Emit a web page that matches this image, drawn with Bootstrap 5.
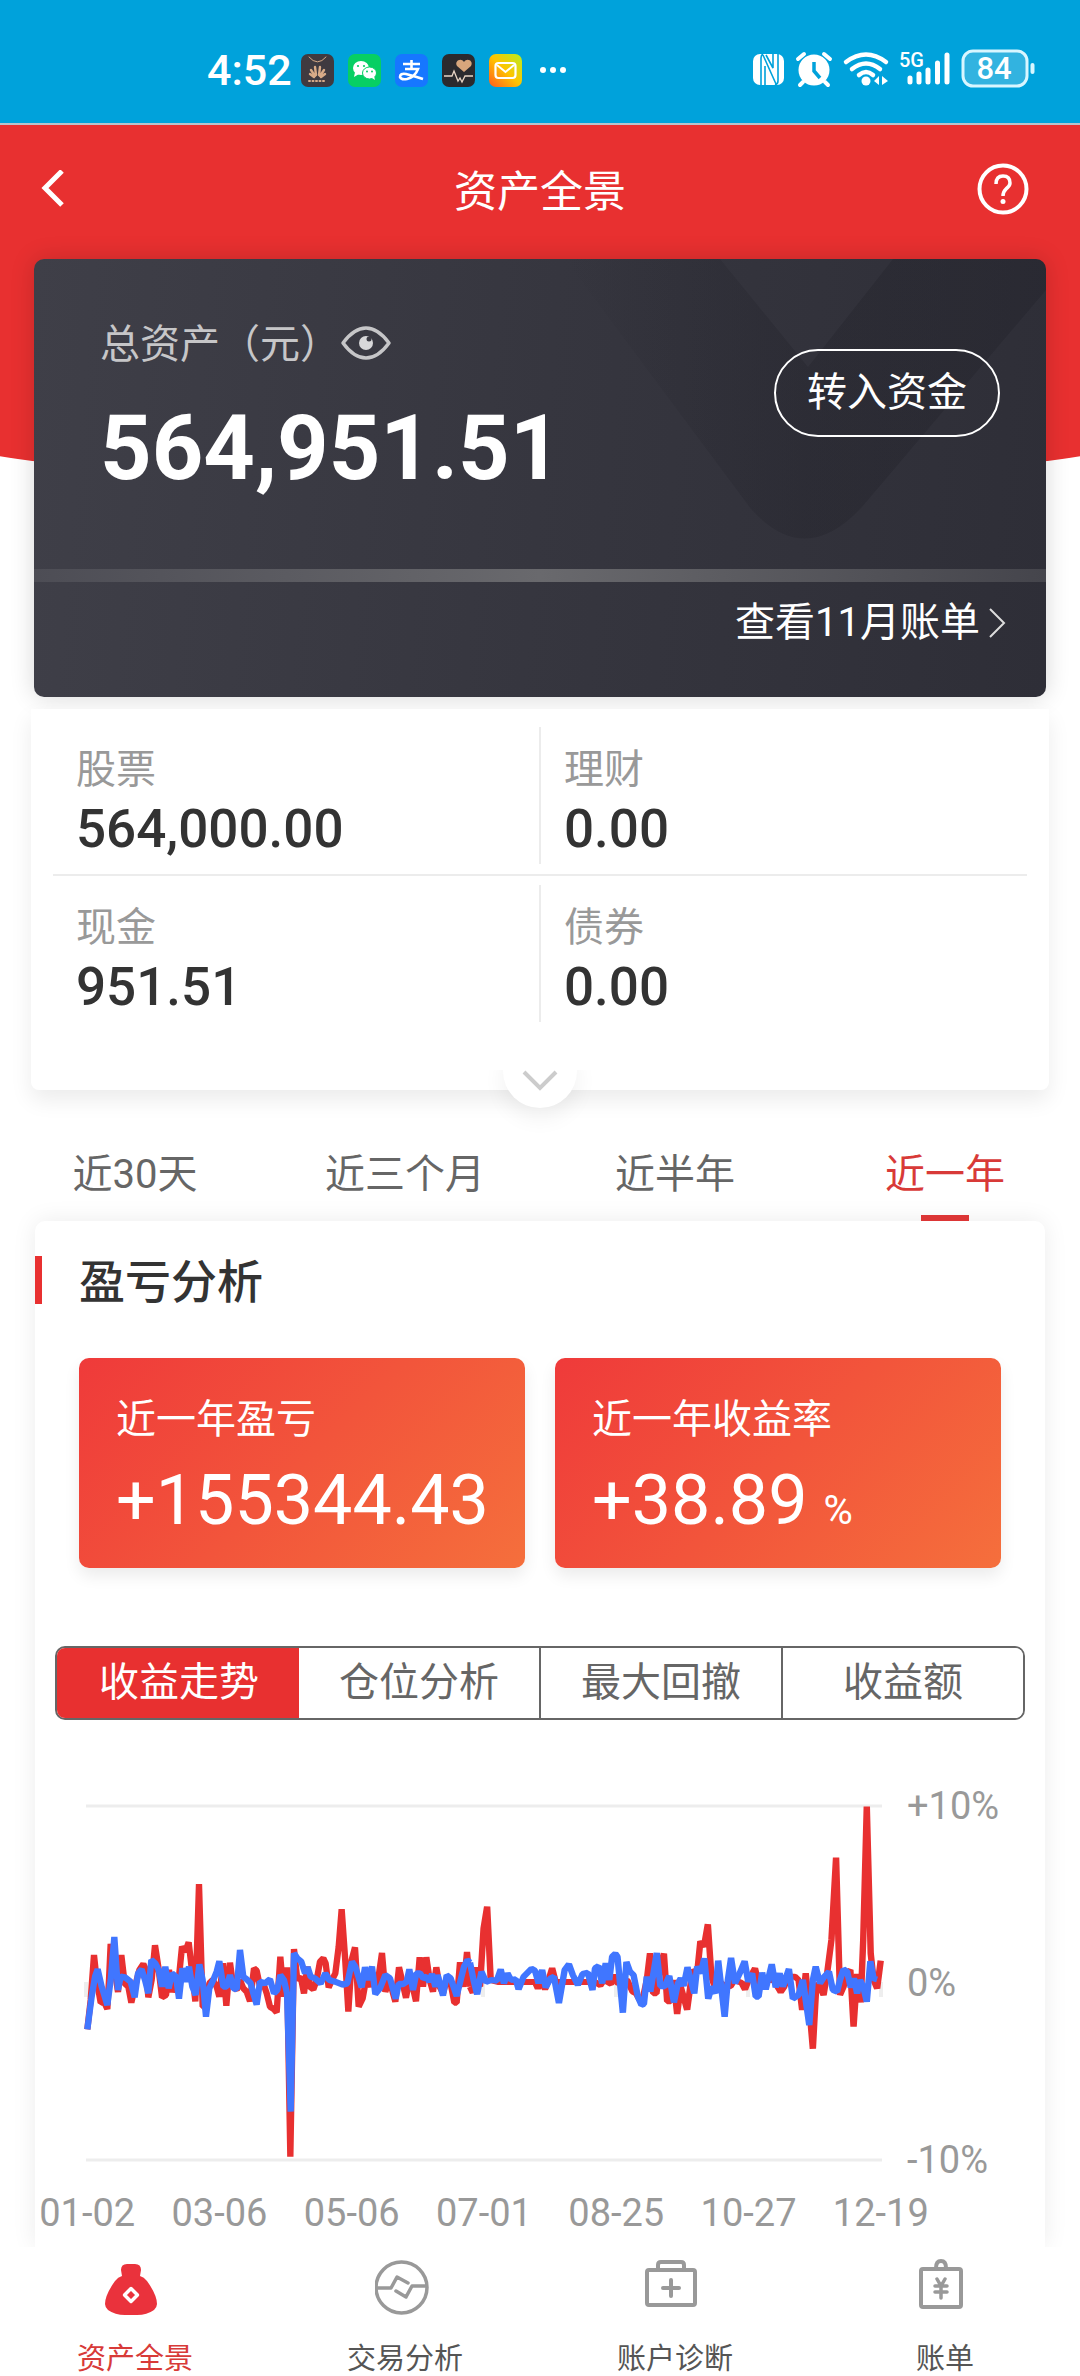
<!DOCTYPE html>
<html lang="zh-CN">
<head>
<meta charset="utf-8">
<meta name="viewport" content="width=device-width, initial-scale=1">
<title>资产全景</title>
<link rel="stylesheet" href="https://cdn.jsdelivr.net/npm/bootstrap@5.3.0/dist/css/bootstrap.min.css">
<style>
  :root { --brand: #e83030; --ink: #333; --muted: #999; --soft: #666; }
  body { font-family: Roboto, "Noto Sans CJK SC", sans-serif; font-size: 40px; line-height: 60px; color: var(--ink); background: #fff; overflow-x: hidden; }
  svg { display: block; flex: none; }
  .status-bar { background: #00a2db; height: 125px; border-bottom: 2px solid #b9c3cc; padding: 14px 44px 0 207px; color: #fff; }
  .status-bar > * { height: 112px; }
  .clock { font-size: 43px; font-weight: 500; width: 94px; }
  .app-icons { gap: 14px; }
  .hero { position: relative; background: var(--brand); height: 312px; margin-bottom: -178px; clip-path: inset(0 0 -60px 0); }
  .hero::after { content: ""; position: absolute; left: -5%; right: -5%; top: 100%; height: 46px; background: var(--brand); border-radius: 0 0 50% 50% / 0 0 100% 100%; }
  .title-bar { height: 130px; padding: 0 40px; }
  .title-bar h1 { font-size: 43px; line-height: 60px; font-weight: 400; margin: 0; padding-top: 4px; color: #fff; }
  .side-slot { width: 64px; }
  .card-shade { box-shadow: 0 0 24px rgba(0,0,0,.16); border-radius: 10px; margin: 0 34px; position: relative; }
  .total-card { position: relative; border-radius: 10px; overflow: hidden; color: #fff; background: linear-gradient(95deg, #3f3f48 0%, #36363f 50%, #2e2e37 100%); }
  .sheen { position: absolute; top: 0; right: 0; }
  .total-main { position: relative; height: 310px; padding: 56px 46px 0 66px; }
  .total-label { color: #c6c6c8; }
  .total-label button { border: 0; background: none; padding: 0 0 4px; }
  .total-value { font-size: 90px; line-height: 100px; font-weight: 700; margin-top: 24px; }
  .transfer { border: 2px solid #fff; border-radius: 44px; height: 88px; padding: 0 31px; color: #fff; background: transparent; font-size: 40px; line-height: 60px; margin-top: 34px; }
  .strip { position: relative; height: 13px; background: linear-gradient(90deg, #4d4d55, #69696d 50%, #45454c); }
  .bill-row { position: relative; height: 115px; padding: 11px 40px 0 0; }
  .bill-row a { color: #fff; text-decoration: none; gap: 9px; }
  .assets { position: relative; margin: 12px 31px 0; padding: 18px 22px 0; height: 381px; background: #fff; border-radius: 0 0 8px 8px; box-shadow: 0 10px 22px rgba(0,0,0,.08); }
  .asset-row { height: 157px; }
  .asset-row + .asset-row { border-top: 2px solid #ececec; }
  .asset-row:first-child { height: 147px; }
  .asset-cell { padding: 13px 23px 0; height: 137px; flex: 1; }
  .asset-row + .asset-row .asset-cell { margin-top: 9px; }
  .asset-cell + .asset-cell { border-left: 2px solid #ececec; }
  .asset-cell dt { font-weight: 400; color: var(--muted); line-height: 60px; }
  .asset-cell dd { font-size: 53px; line-height: 58px; font-weight: 500; margin: 0; }
  .expander { position: absolute; left: 50%; bottom: -18px; margin-left: -37px; width: 74px; height: 74px; border: 0; border-radius: 50%; background: #fff; padding: 20px 0 0; box-shadow: 0 10px 22px rgba(0,0,0,.06); clip-path: inset(36px -40px -40px -40px); }
  .periods { margin-top: 50px; height: 81px; }
  .periods button { flex: 1; border: 0; border-radius: 0; background: none; color: var(--soft); padding: 5px 0 0; font-size: 40px; line-height: 60px; display: flex; flex-direction: column; align-items: center; justify-content: space-between; }
  .periods .active { color: #d83a38; }
  .periods .active::after { content: ""; width: 48px; height: 6px; background: #dc3636; position: relative; z-index: 1; }
  .analysis { margin: 0 35px; padding-top: 35px; height: 1026px; border-radius: 10px 10px 0 0; background: #fff; box-shadow: 0 0 24px rgba(0,0,0,.08); }
  .analysis h2 { border-left: 7px solid var(--brand); padding: 5px 0 0 37px; margin: 0; font-size: 46px; line-height: 43px; font-weight: 500; }
  .kpis { padding: 54px 44px 0; gap: 30px; }
  .kpi { flex: 1; min-width: 0; height: 210px; border-radius: 10px; padding: 32px 37px 0; color: #fff; background: linear-gradient(135deg, #ef3a3a, #f56f3c); box-shadow: 0 8px 16px rgba(0,0,0,.08); white-space: nowrap; }
  .kpi-value { font-size: 70px; line-height: 100px; }
  .kpi-value span { font-size: 40px; margin-left: 16px; }
  .segments { margin: 78px 20px 0; height: 74px; border: 2px solid var(--soft); border-radius: 10px; overflow: hidden; }
  .segments button { flex: 1; border: 0; border-radius: 0; background: #fff; color: var(--soft); padding: 0; font-size: 40px; line-height: 60px; }
  .segments button + button { border-left: 2px solid var(--soft); }
  .segments .active { background: var(--brand); color: #fff; margin: -2px 0 -2px -2px; padding-left: 4px; }
  .segments .active + button { border-left: 0; }
  .plot-row { margin-top: 60px; padding: 0 49px; }
  .plot-row .plot { flex: 1; width: 800px; height: auto; }
  .y-labels { width: 112px; padding-left: 23px; font-size: 38px; line-height: 52px; color: var(--muted); }
  .x-labels { padding-right: 98px; margin-left: -14px; font-size: 38px; line-height: 54px; color: var(--muted); }
  .x-labels span { flex: 1; text-align: center; white-space: nowrap; }
  .bottom-nav { position: relative; height: 129px; background: #fff; }
  .bottom-nav a { flex: 1; color: #555; text-decoration: none; font-size: 29px; line-height: 36px; padding-top: 8px; gap: 26px; }
  .bottom-nav a.active { color: #d83a38; }
</style>
</head>
<body>
<div class="status-bar d-flex align-items-start justify-content-between">
  <div class="d-flex align-items-center">
    <span class="clock">4:52</span>
    <div class="app-icons d-flex align-items-center">
      <svg width="33" height="33" viewBox="0 0 33 33"><rect width="33" height="33" rx="7" fill="#403a40"/><g fill="none" stroke="#d9ab88" stroke-linecap="round"><path d="M8 3q8.500 10 17 0" stroke-width="1"/><path d="M15 21l-1-8M14 22l-4-6M13 23l-4-3M18 21l1-8M19 22l4-6M20 23l4-3" stroke-width="2.400"/><path d="M8 27h17" stroke-width="2" stroke-dasharray="1 2.500"/></g></svg>
      <svg width="33" height="33" viewBox="0 0 33 33"><rect width="33" height="33" rx="7" fill="#07cf63"/><ellipse cx="13" cy="14" rx="8" ry="7" fill="#fff"/><path d="M7 18l-1 5 5-3z" fill="#fff"/><ellipse cx="21.500" cy="19" rx="7" ry="6" fill="#fff" stroke="#07cf63"/><path d="M24 24l3 2-1-4z" fill="#fff"/><g fill="#07cf63"><circle cx="10" cy="12" r="1.100"/><circle cx="16" cy="12" r="1.100"/><circle cx="19" cy="17.500" r="1"/><circle cx="24" cy="17.500" r="1"/></g></svg>
      <svg width="33" height="33" viewBox="0 0 33 33"><rect width="33" height="33" rx="7" fill="#1677ff"/><path d="M8 10h17M16.500 6v9M10 15h13q-3 8-11 10-6 1-7-2 0-4 6-3 8 2 17 5" fill="none" stroke="#fff" stroke-width="2.600"/></svg>
      <svg width="33" height="33" viewBox="0 0 33 33"><rect width="33" height="33" rx="7" fill="#2b2a2e"/><path d="M22 18l-7-6c-3-5 4-9 7-4 3-5 10-1 7 4z" fill="#d8a67c"/><path d="M2 22h8l2-5 4 10 2-3 2 4 3-6h8" fill="none" stroke="#e8d5c6" stroke-width="1.300"/></svg>
      <svg width="33" height="33" viewBox="0 0 33 33"><defs><linearGradient id="mail" x1="0" y1="1" x2="1" y2="0"><stop offset="0" stop-color="#ff5a1f"/><stop offset=".5" stop-color="#ffc400"/><stop offset="1" stop-color="#b6ee20"/></linearGradient></defs><rect width="33" height="33" rx="7" fill="url(#mail)"/><rect x="6.500" y="9" width="20" height="15" rx="3" fill="none" stroke="#fff" stroke-width="2.200"/><path d="M8 11l8.500 7 8.500-7" fill="none" stroke="#fff" stroke-width="2"/></svg>
      <svg width="36" height="33" viewBox="0 0 36 33" fill="#fff"><circle cx="7" cy="16" r="3"/><circle cx="17" cy="16" r="3"/><circle cx="27" cy="16" r="3"/></svg>
    </div>
  </div>
  <div class="d-flex align-items-center">
  <svg width="286" height="60" viewBox="748 40 286 60" fill="#fff" role="img" aria-label="NFC 5G 84%">
    <rect x="751" y="54" width="31" height="31" rx="7"/>
    <path d="M759 85V58q0-3 2-4M761 55l13 29M773 85q3-1 3-4V54" fill="none" stroke="#00a2db" stroke-width="1.600"/>
    <path d="M763 66v19M771 54v14l-7-13" fill="none" stroke="#00a2db" stroke-width="1.600"/>
    <circle cx="812" cy="70" r="15.500"/><path d="M796 59l6-5M828 59l-6-5M801 82l-3 3M823 82l3 3" stroke="#fff" stroke-width="4" stroke-linecap="round"/><path d="M812 62v9l6 7" fill="none" stroke="#00a2db" stroke-width="3.500"/>
    <g fill="none" stroke="#fff" stroke-width="4.500" stroke-linecap="round"><path d="M844 62q20-15 40 0"/><path d="M850 69q14-11 28 0"/><path d="M857 75q7-6 14 0"/></g><circle cx="864" cy="81" r="4.500"/><path d="M877 76v9l-5-4zM880 76v9l6-4z"/>
    <text x="897" y="67" font-size="20" font-weight="500">5G</text>
    <g stroke="#fff" stroke-width="5" stroke-linecap="round"><path d="M908 78v4M917 74v8M926 70v12M935.500 63v19M945 55v27"/></g>
    <rect x="961" y="51" width="64" height="35" rx="10" fill="#32b3e0" stroke="#d8f6ff" stroke-width="3"/><path d="M1030.500 65v7" stroke="#d8f6ff" stroke-width="4" stroke-linecap="round"/>
    <text x="992" y="79" font-size="31" font-weight="500" text-anchor="middle">84</text>
  </svg>
  </div>
</div>

<header class="hero">
  <div class="title-bar d-flex align-items-center justify-content-between">
    <a href="#" class="side-slot" aria-label="返回"><svg width="26" height="40" viewBox="0 0 26 40"><path d="M22 1L5 18l17 17" fill="none" stroke="#fff" stroke-width="5"/></svg></a>
    <h1>资产全景</h1>
    <a href="#" class="side-slot" aria-label="帮助"><svg width="54" height="54" viewBox="-1 1 54 54" fill="none" stroke="#fff"><circle cx="26" cy="27" r="23.500" stroke-width="4"/><path d="M19 22q0-8 7-8 7 0 7 7 0 3-4 6-3 3-3 7" stroke-width="3.500"/><circle cx="26" cy="39.500" r="2.500" fill="#fff" stroke="none"/></svg></a>
  </div>
</header>

<main>
  <div class="card-shade">
  <section class="total-card">
    <svg class="sheen" width="520" height="310" viewBox="0 0 520 310"><defs><linearGradient id="fold" x1="0" x2="1" y1="0" y2="0"><stop offset="0" stop-color="#1e1e26" stop-opacity="0"/><stop offset=".5" stop-color="#1e1e26" stop-opacity=".28"/><stop offset="1" stop-color="#1e1e26" stop-opacity=".3"/></linearGradient></defs><path d="M39 0L225 250Q279 310 336 248L520 31V0H367L282 108 194 0z" fill="url(#fold)"/></svg>
    <div class="total-main d-flex justify-content-between align-items-start">
      <div>
        <div class="total-label d-flex align-items-center"><span>总资产（元）</span><button type="button" aria-label="隐藏金额"><svg width="52" height="40" viewBox="0 0 52 40"><path d="M3 20Q14 5 26 5T49 20Q38 35 26 35T3 20z" fill="none" stroke="#c6c6c8" stroke-width="3.500" stroke-linejoin="round"/><circle cx="26" cy="20" r="7" fill="#d8d8da"/><circle cx="29" cy="16" r="2.500" fill="#3a3a43"/></svg></button></div>
        <div class="total-value">564,951.51</div>
      </div>
      <button type="button" class="transfer">转入资金</button>
    </div>
    <div class="strip"></div>
    <div class="bill-row d-flex justify-content-end align-items-start">
      <a href="#" class="d-flex align-items-center"><span>查看11月账单</span><svg width="17" height="30" viewBox="0 0 17 30"><path d="M1 1l14 14L1 29" fill="none" stroke="#ddd" stroke-width="2"/></svg></a>
    </div>
  </section>
  </div>

  <section class="assets">
    <dl class="asset-row d-flex mb-0">
      <div class="asset-cell"><dt>股票</dt><dd>564,000.00</dd></div>
      <div class="asset-cell"><dt>理财</dt><dd>0.00</dd></div>
    </dl>
    <dl class="asset-row d-flex mb-0">
      <div class="asset-cell"><dt>现金</dt><dd>951.51</dd></div>
      <div class="asset-cell"><dt>债券</dt><dd>0.00</dd></div>
    </dl>
    <button type="button" class="expander" aria-label="展开"><svg class="mx-auto" width="36" height="24" viewBox="0 0 36 24"><path d="M2 3l16 16L34 3" fill="none" stroke="#ccc" stroke-width="4"/></svg></button>
  </section>

  <div class="periods d-flex">
    <button type="button">近30天</button>
    <button type="button">近三个月</button>
    <button type="button">近半年</button>
    <button type="button" class="active">近一年</button>
  </div>

  <section class="analysis">
    <h2>盈亏分析</h2>
    <div class="kpis d-flex">
      <div class="kpi"><div>近一年盈亏</div><div class="kpi-value">+155344.43</div></div>
      <div class="kpi"><div>近一年收益率</div><div class="kpi-value">+38.89<span>%</span></div></div>
    </div>
    <div class="segments d-flex">
      <button type="button" class="active">收益走势</button>
      <button type="button">仓位分析</button>
      <button type="button">最大回撤</button>
      <button type="button">收益额</button>
    </div>
    <div class="plot-row d-flex align-items-center">
      <svg class="plot" viewBox="84 1780 800 406" role="img" aria-label="收益走势图">
        <path d="M86 1806H882M86 2160H882" stroke="#ededed" stroke-width="3"/>
        <path d="M86 1982v15M483 1982v15M616 1982v15M748 1982v15M881 1982v15" stroke="#eee" stroke-width="4"/>
        <g fill="none" stroke="#e83030" stroke-linejoin="bevel">
          <polyline transform="translate(60 1780) scale(.33333)" stroke-width="19" points="82,748 92,660 102,525 110,600 122,668 132,665 142,687 147,600 152,492 160,540 174,636 184,525 194,610 205,620 214,668 225,620 238,570 250,552 258,570 265,652 275,600 285,496 295,560 306,652 318,645 327,570 336,636 347,600 356,600 366,500 376,515 386,487 397,580 406,664 417,312 428,680 438,680 448,610 458,600 470,620 478,650 489,550 499,677 510,548 520,620 530,630 540,600 550,625 560,635 570,664 582,565 590,572 600,620 610,610 620,640 630,680 640,686 650,697 661,530 671,650 681,562 691,1130 702,507 712,600 722,590 732,640 742,560 750,620 760,628 770,600 780,545 790,535 797,550 806,622 816,600 826,580 836,500 845,388 855,530 865,695 875,540 885,502 896,680 908,655 918,600 928,620 938,580 950,630 966,519 976,635 988,600 1006,665 1017,562 1028,610 1038,653 1048,600 1058,620 1068,664 1079,532 1089,620 1099,532 1109,600 1119,635 1129,562 1139,620 1149,640 1160,600 1172,610 1183,668 1190,668 1200,547 1211,620 1221,516 1231,620"/>
          <polyline transform="translate(470 1780) scale(.35714 .33333)" stroke-width="18" points="0,620 8,638 18,562 28,620 38,445 48,380 58,600 80,606 130,606 160,606 182,606 190,625 200,600 210,628 220,600 230,565 240,606 300,606 350,606 365,616 375,600 385,606 395,612 405,585 415,612 440,600 455,635 465,640 475,660 485,650 495,600 504,520 513,640 522,640 532,560 543,521 552,664 562,664 570,600 580,702 590,620 598,650 608,689 618,610 625,570 636,580 645,484 655,500 666,433 676,590 685,620 700,606 715,620 730,618 740,600 760,608 770,628 780,600 798,565 808,610 830,600 850,600 870,636 880,620 890,590 910,590 920,600 930,690 940,580 950,680 960,806 970,610 980,620 990,645 1000,580 1012,480 1025,233 1036,645 1046,620 1055,580 1065,570 1074,740 1084,582 1094,667 1101,480 1111,80 1122,520 1130,600 1140,625 1150,542"/>
        </g>
        <g fill="none" stroke="#4076ff" stroke-linejoin="bevel">
          <polyline transform="translate(60 1780) scale(.33333)" stroke-width="19" points="82,748 95,650 105,590 113,568 125,620 142,675 152,600 163,471 174,630 182,590 195,592 212,605 224,652 234,580 245,568 255,600 265,640 274,540 286,550 296,570 306,620 316,560 326,625 336,580 348,590 357,656 367,565 377,605 387,560 397,620 407,645 418,553 428,600 438,710 448,625 460,600 470,575 478,544 490,620 500,620 510,585 520,625 530,628 540,510 550,590 560,598 572,610 580,640 590,674 600,605 615,610 630,598 642,640 652,630 661,585 672,600 681,640 692,995 702,520 712,535 724,545 735,580 743,562 752,590 765,595 782,610 796,580 808,600 825,605 848,614 862,610 876,545 886,560 905,622 915,562 925,600 936,560 946,642 960,625 976,585 990,595 1007,656 1016,612 1030,612 1040,605 1048,568 1059,630 1069,580 1080,580 1090,595 1100,590 1108,605 1116,582 1126,620 1133,585 1149,646 1160,586 1172,595 1190,648 1202,600 1212,560 1222,541 1231,548"/>
          <polyline transform="translate(470 1780) scale(.35714 .33333)" stroke-width="18" points="0,548 10,600 20,643 32,575 45,606 60,600 75,602 86,568 95,610 105,580 115,600 128,598 136,628 150,590 172,566 182,572 192,610 202,570 212,622 225,595 235,590 249,669 265,570 277,553 288,585 302,615 315,582 330,578 343,630 350,565 360,558 370,610 380,550 390,600 398,530 407,521 413,530 428,698 438,546 448,575 458,585 470,650 480,675 487,672 495,590 505,635 523,519 533,618 545,620 558,588 571,667 582,610 590,595 598,618 609,562 628,640 636,560 646,580 656,535 667,656 677,620 687,640 695,542 713,710 722,600 731,534 742,610 755,580 769,544 779,605 790,580 800,650 808,650 818,578 828,628 845,553 856,622 867,580 876,620 893,567 904,656 920,645 932,600 950,735 960,600 968,560 980,610 992,590 1005,575 1016,630 1028,635 1036,600 1046,568 1056,575 1066,622 1075,595 1084,640 1092,600 1101,620 1111,665 1121,544 1130,595 1140,598"/>
        </g>
      </svg>
      <div class="y-labels d-flex flex-column justify-content-between align-self-stretch"><span>+10%</span><span>0%</span><span>-10%</span></div>
    </div>
    <div class="x-labels d-flex"><span>01-02</span><span>03-06</span><span>05-06</span><span>07-01</span><span>08-25</span><span>10-27</span><span>12-19</span></div>
  </section>
</main>

<nav class="bottom-nav d-flex">
  <a href="#" class="active d-flex flex-column align-items-center"><svg width="60" height="60" viewBox="0 0 60 60"><path d="M16 15q0-6 6-6h8q6 0 6 6l-1 6q4 1 7 5 10 14 10 23 0 3-3 6-7 5-17 5H20q-10 0-17-5-3-3-3-6 0-9 10-23 3-4 7-5z" fill="#ea323c"/><path d="M26 33.500l6.500 6.500-6.500 6.500-6.500-6.500z" fill="none" stroke="#fff" stroke-width="3.500" stroke-linejoin="round"/></svg><span>资产全景</span></a>
  <a href="#" class="d-flex flex-column align-items-center"><svg width="60" height="60" viewBox="0 0 60 60" fill="none" stroke="#999" stroke-width="3.500" stroke-linecap="round" stroke-linejoin="round"><circle cx="26.500" cy="32.500" r="25.500"/><path d="M2 33h14l6-11 11 6M21 36l10 6 6-11h14"/></svg><span>交易分析</span></a>
  <a href="#" class="d-flex flex-column align-items-center"><svg width="60" height="60" viewBox="0 0 60 60" fill="none" stroke="#999" stroke-width="4" stroke-linecap="round"><rect x="2" y="15" width="48" height="35" rx="2"/><path d="M13 14v-4q0-3 3-3h20q3 0 3 3v4M26 25v16M18 33h16"/></svg><span>账户诊断</span></a>
  <a href="#" class="d-flex flex-column align-items-center"><svg width="60" height="60" viewBox="0 0 60 60" fill="none" stroke="#999" stroke-width="4" stroke-linecap="round"><rect x="6" y="14" width="40" height="38" rx="2"/><path d="M21 13q0-7 5-7t5 7"/><path d="M22 24l4 7 4-7M26 31v12M20 31h12M20 37h12" stroke-width="3.500"/></svg><span>账单</span></a>
</nav>
<script src="https://cdn.jsdelivr.net/npm/bootstrap@5.3.0/dist/js/bootstrap.bundle.min.js"></script>
</body>
</html>
